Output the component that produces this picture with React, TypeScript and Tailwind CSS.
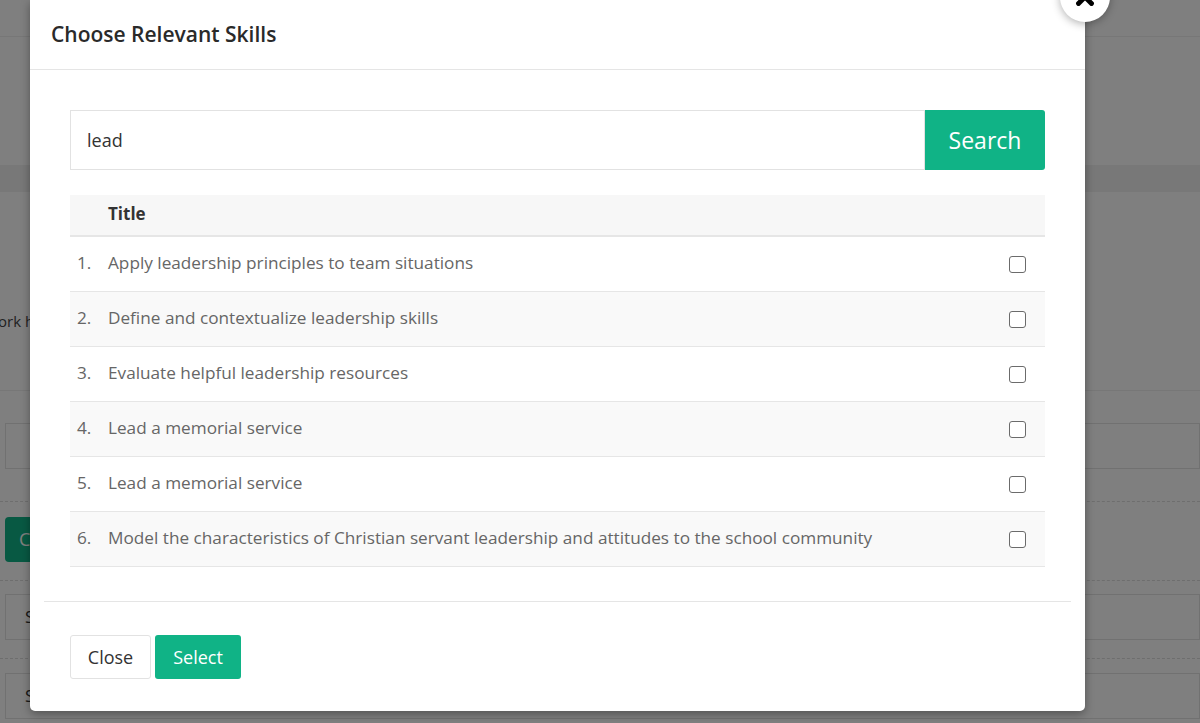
import { X } from "lucide-react";

const skills = [
  "Apply leadership principles to team situations",
  "Define and contextualize leadership skills",
  "Evaluate helpful leadership resources",
  "Lead a memorial service",
  "Lead a memorial service",
  "Model the characteristics of Christian servant leadership and attitudes to the school community",
];

const Checkbox = () => (
  <span className="block w-[17px] h-[17px] rounded-[3px] border-[1.5px] border-[#6b6b6b] bg-white" />
);

// the page sitting underneath the modal backdrop
const BackgroundPage = () => (
  <div className="w-full h-full bg-white">
    <div className="h-[37px] border-b border-[#eee]" />
    <div className="h-[128px]" />
    <div className="h-[27px] bg-[#f0f0f0]" />
    <div className="h-[119px]" />
    <p className="text-[15px] text-[#444] leading-5 -ml-[2px]">ork hrs</p>
    <div className="h-[60px] border-b border-[#eee]" />
    <div className="h-[32px]" />
    <div className="ml-[5px] h-[46px] border border-[#e2e2e2]" />
    <div className="h-[33px] border-b border-dashed border-[#ddd]" />
    <div className="h-[15px]" />
    <div className="ml-[5px] h-[45px] w-[140px] rounded bg-[#10b386] text-white text-[18px] flex items-center pl-[14px]">Clr</div>
    <div className="h-[19px] border-b border-dashed border-[#ddd]" />
    <div className="h-[13px]" />
    <div className="ml-[5px] h-[46px] border border-[#e2e2e2] flex items-center pl-[19px] text-[17px] text-[#333]">Sk</div>
    <div className="h-[19px] border-b border-dashed border-[#ddd]" />
    <div className="h-[14px]" />
    <div className="ml-[5px] h-[46px] border border-[#e2e2e2] flex items-center pl-[19px] text-[17px] text-[#333]">Se</div>
  </div>
);

const App = () => {
  return (
    <div
      className="relative w-[1200px] h-[723px] overflow-hidden"
      style={{ fontFamily: '"Open Sans", "Noto Sans", sans-serif' }}
    >
      <BackgroundPage />

      {/* Backdrop + modal */}
      <div className="absolute inset-0 bg-black/50">
        <div className="relative ml-[30px] w-[1055px] bg-white rounded-b-[5px] shadow-[0_3px_10px_rgba(0,0,0,0.35)]">
          {/* Close bubble */}
          <button className="absolute -right-[25px] -top-[28px] w-[50px] h-[50px] rounded-full bg-white shadow-[0_2px_8px_rgba(0,0,0,0.3)] flex items-center justify-center">
            <X className="w-[26px] h-[26px] text-black" strokeWidth={4.5} />
          </button>

          {/* Header */}
          <div className="h-[70px] border-b border-[#e5e5e5] px-[21px] flex items-center">
            <h2 className="text-[21px] font-semibold text-[#2a2a2a]">Choose Relevant Skills</h2>
          </div>

          {/* Body */}
          <div className="px-[40px] pt-[40px] pb-[34px]">
            <div className="flex h-[60px]">
              <div className="flex-1 border border-[#e2e2e2] flex items-center pl-[16px] text-[18px] text-[#333]">lead</div>
              <button className="w-[120px] bg-[#10b386] text-white text-[23px] rounded-r-[3px] flex items-center justify-center">
                Search
              </button>
            </div>

            <div className="mt-[25px]">
              <div className="grid grid-cols-[38px_1fr_55px] h-[42px] bg-[#f7f7f7] border-b-2 border-[#e6e6e6] items-center">
                <span />
                <span className="text-[17px] font-bold text-[#333] -mt-[3px]">Title</span>
                <span />
              </div>
              {skills.map((s, i) => (
                <div
                  key={i}
                  className={`grid grid-cols-[38px_1fr_55px] h-[55px] items-center border-b border-[#e6e6e6] text-[17.2px] text-[#666] ${
                    i % 2 === 1 ? "bg-[#f9f9f9]" : "bg-white"
                  }`}
                >
                  <span className="pl-[7px] -mt-[2px]">{i + 1}.</span>
                  <span className="-mt-[2px]">{s}</span>
                  <span className="flex justify-center">
                    <Checkbox />
                  </span>
                </div>
              ))}
            </div>
          </div>

          {/* Footer */}
          <div className="mx-[14px] border-t border-[#e5e5e5] px-[26px] pt-[33px] pb-[32px] flex gap-[4px]">
            <button className="h-[44px] w-[81px] border border-[#e2e2e2] rounded-[3px] bg-white text-[18px] text-[#333]">Close</button>
            <button className="h-[44px] w-[86px] rounded-[3px] bg-[#10b386] text-[18px] text-white">Select</button>
          </div>
        </div>
      </div>
    </div>
  );
};

export default App;
